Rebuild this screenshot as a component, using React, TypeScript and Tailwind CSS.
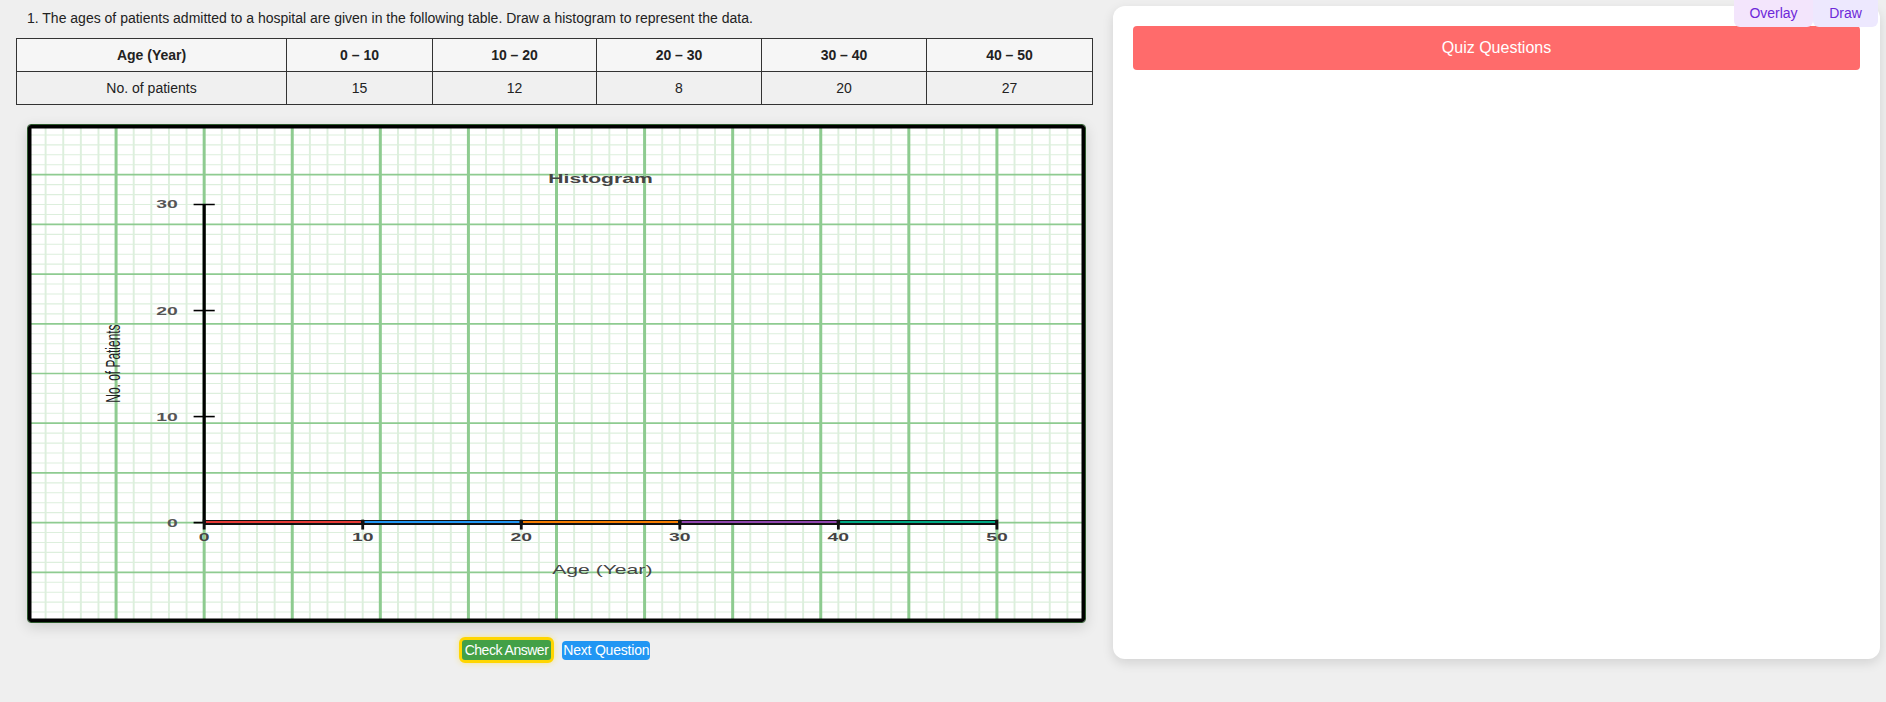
import React from "react";

const ranges = ["0 – 10", "10 – 20", "20 – 30", "30 – 40", "40 – 50"];
const counts = [15, 12, 8, 20, 27];
const colWidths = ["w-[146px]", "w-[164px]", "w-[165px]", "w-[165px]", "w-[166px]"];
const segColors = ["#e53935", "#2196f3", "#f57c00", "#8e44ad", "#00a884"];

// Graph paper drawn in a 600x500 box, stretched to fit the card
function GraphPaper() {
  const minor: number[] = [];
  for (let i = 10; i < 600; i += 10) if (i % 50 !== 0) minor.push(i);
  const minorY = minor.filter((v) => v < 500);
  const major: number[] = [];
  for (let i = 0; i <= 600; i += 50) major.push(i);
  const yTicks = [0, 10, 20, 30];
  const xTicks = [0, 10, 20, 30, 40, 50];
  const yPos = (v: number) => 400 - (v * 320) / 30;
  const xPos = (v: number) => 100 + v * 9;

  return (
    <svg
      viewBox="0 0 600 500"
      preserveAspectRatio="none"
      className="block h-[497px] w-[1057px]"
    >
      <rect x="0" y="0" width="600" height="500" fill="#ffffff" />
      {minor.map((x) => (
        <line key={"mx" + x} x1={x} y1="0" x2={x} y2="500" stroke="#ddefdd" strokeWidth="1.1" />
      ))}
      {minorY.map((y) => (
        <line key={"my" + y} x1="0" y1={y} x2="600" y2={y} stroke="#ddefdd" strokeWidth="1.1" />
      ))}
      {major.map((x) => (
        <line key={"Mx" + x} x1={x} y1="0" x2={x} y2="500" stroke="#8ecb90" strokeWidth="1.7" />
      ))}
      {major
        .filter((y) => y <= 500)
        .map((y) => (
          <line key={"My" + y} x1="0" y1={y} x2="600" y2={y} stroke="#8ecb90" strokeWidth="1.7" />
        ))}

      <text x="325" y="58" textAnchor="middle" fontSize="12" fontWeight="bold" fill="#444" fontFamily="Liberation Sans, Arial, sans-serif">
        Histogram
      </text>

      {/* y axis */}
      <line x1="100" y1="80" x2="100" y2="400" stroke="#000" strokeWidth="1.8" />
      {yTicks.map((v) => (
        <g key={"yt" + v}>
          <line x1="94" y1={yPos(v)} x2="106" y2={yPos(v)} stroke="#000" strokeWidth="1.6" />
          <text x="85" y={yPos(v) + 4} textAnchor="end" fontSize="11" fontWeight="600" fill="#555" fontFamily="Liberation Sans, Arial, sans-serif">
            {v}
          </text>
        </g>
      ))}
      <text
        transform="translate(52 240) rotate(-90)"
        textAnchor="middle"
        fontSize="12"
        fill="#222"
        fontFamily="Liberation Sans, Arial, sans-serif"
      >
        No. of Patients
      </text>

      {/* x axis */}
      <line x1="100" y1="400" x2="550" y2="400" stroke="#111" strokeWidth="5" />
      {segColors.map((c, i) => (
        <line key={c} x1={xPos(i * 10) + 1} y1="399.5" x2={xPos(i * 10 + 10) - 1} y2="399.5" stroke={c} strokeWidth="2" />
      ))}
      {xTicks.map((v) => (
        <g key={"xt" + v}>
          <line x1={xPos(v)} y1="397" x2={xPos(v)} y2="407" stroke="#111" strokeWidth="1.6" />
          <text x={xPos(v)} y="419" textAnchor="middle" fontSize="11" fontWeight="bold" fill="#444" fontFamily="Liberation Sans, Arial, sans-serif">
            {v}
          </text>
        </g>
      ))}
      <text x="326" y="452" textAnchor="middle" fontSize="12" fill="#444" fontFamily="Liberation Sans, Arial, sans-serif">
        Age (Year)
      </text>

      <rect
        x="0"
        y="0"
        width="600"
        height="500"
        fill="none"
        stroke="#000"
        strokeWidth="7"
        vectorEffect="non-scaling-stroke"
      />
    </svg>
  );
}

export default function App() {
  return (
    <div className="relative flex h-screen w-full bg-[#efefef] font-['Liberation_Sans',Arial,sans-serif] text-[#222]">
      {/* Left column: question, table, graph */}
      <div className="w-[1092px] shrink-0 pl-4 pt-[10px]">
        <p className="ml-[11px] text-[14px] leading-[16px] text-[#222]">
          1. The ages of patients admitted to a hospital are given in the following table. Draw a histogram to represent the data.
        </p>

        <table className="mt-[12px] w-[1076px] table-fixed border-collapse text-[14px]">
          <thead>
            <tr className="bg-[#f6f6f6]">
              <th className="h-[33px] w-[270px] border border-[#333] font-bold">Age (Year)</th>
              {ranges.map((r, i) => (
                <th key={r} className={`h-[33px] border border-[#333] font-bold ${colWidths[i]}`}>
                  {r}
                </th>
              ))}
            </tr>
          </thead>
          <tbody>
            <tr className="bg-[#f0f0f0]">
              <td className="h-[33px] border border-[#333] text-center">No. of patients</td>
              {counts.map((c, i) => (
                <td key={i} className="h-[33px] border border-[#333] text-center">
                  {c}
                </td>
              ))}
            </tr>
          </tbody>
        </table>

        <div className="ml-[11px] mt-[19px] w-[1059px] overflow-hidden rounded-[4px] border border-[#2d5a2d] bg-white shadow-[0_4px_14px_rgba(0,0,0,0.14)]">
          <GraphPaper />
        </div>

        <div className="ml-[11px] mt-[14px] flex w-[1055px] items-center justify-center gap-2">
          <button className="h-[26px] rounded-[6px] border-[3px] border-[#ffd600] bg-[#43a047] px-[3px] text-[14px] leading-[18px] tracking-[-0.035em] text-white shadow-[0_0_6px_rgba(255,214,0,0.4)]">
            Check Answer
          </button>
          <button className="h-[19px] rounded-[4px] bg-[#2196f3] px-[1px] text-[14px] leading-[19px] tracking-[-0.015em] text-white">
            Next Question
          </button>
        </div>
      </div>

      {/* Right panel */}
      <div className="ml-[21px] mt-[6px] h-[653px] w-[767px] rounded-[12px] bg-white p-5 shadow-[0_4px_12px_rgba(0,0,0,0.12)]">
        <button className="h-[44px] w-full rounded-[4px] bg-[#ff6b6b] text-[16px] text-white">
          Quiz Questions
        </button>
      </div>

      {/* Top-right toggles */}
      <div className="absolute right-[8px] top-0 flex">
        <button className="h-[27px] w-[79px] rounded-b-[6px] bg-[#f3e5fc] text-[14px] text-[#6d28d9]">Overlay</button>
        <button className="h-[27px] w-[65px] rounded-b-[6px] bg-[#ede8fe] text-[14px] text-[#6d28d9]">Draw</button>
      </div>
    </div>
  );
}
